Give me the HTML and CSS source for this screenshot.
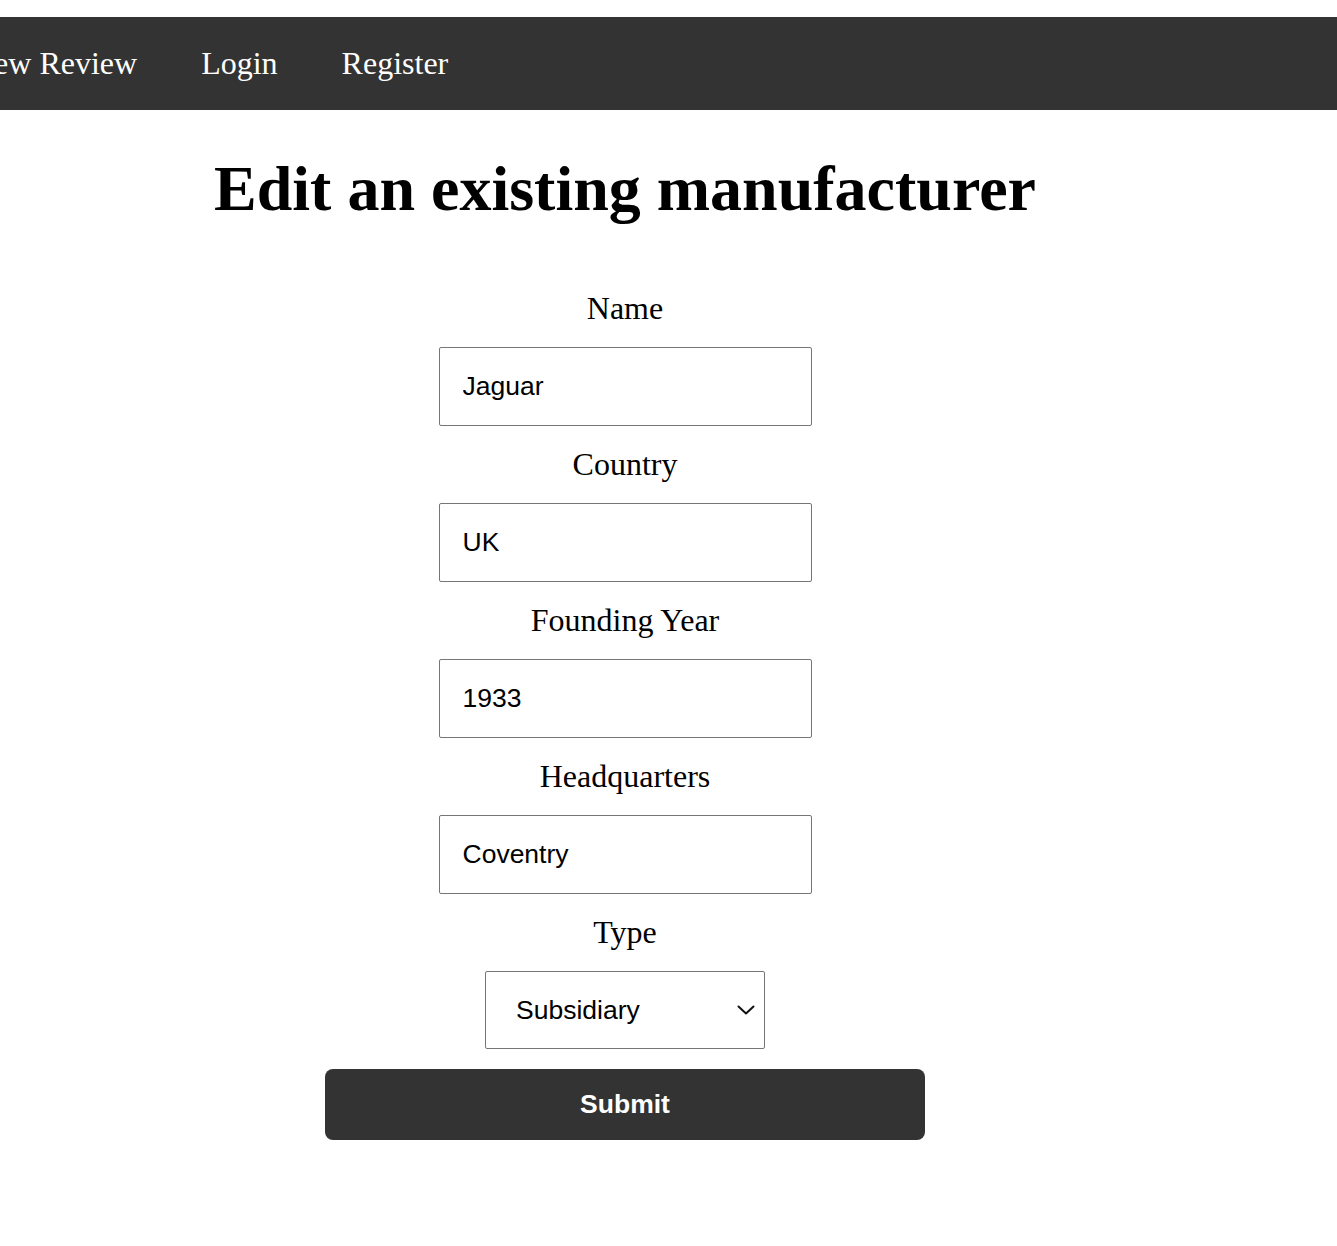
FILE: index.html
```html
<!DOCTYPE html>
<html lang="en">
<head>
<meta charset="utf-8">
<title>Edit an existing manufacturer</title>
<link rel="stylesheet" href="styles.css">
</head>
<body>
<nav class="topnav">
  <ul class="topnav-list">
    <li><a href="#">New Review</a></li>
    <li><a href="#">Login</a></li>
    <li><a href="#">Register</a></li>
  </ul>
</nav>
<main class="page">
  <h1 class="page-title">Edit an existing manufacturer</h1>
  <form class="edit-form">
    <label class="field-label" for="name">Name</label>
    <input class="field-input" id="name" type="text" value="Jaguar">
    <label class="field-label" for="country">Country</label>
    <input class="field-input" id="country" type="text" value="UK">
    <label class="field-label" for="year">Founding Year</label>
    <input class="field-input" id="year" type="text" value="1933">
    <label class="field-label" for="hq">Headquarters</label>
    <input class="field-input" id="hq" type="text" value="Coventry">
    <label class="field-label" for="type">Type</label>
    <div class="select-wrap">
      <select class="field-select" id="type">
        <option>Independent</option>
        <option selected>Subsidiary</option>
      </select>
      <svg class="select-arrow" width="18" height="10" viewBox="0 0 18 10" aria-hidden="true">
        <path d="M1.5 1.5 L9 8.5 L16.5 1.5" fill="none" stroke="#111" stroke-width="2" stroke-linecap="round" stroke-linejoin="round"/>
      </svg>
    </div>
    <button class="submit-btn" type="button">Submit</button>
  </form>
</main>
</body>
</html>
```
FILE: styles.css
```css
html, body {
  margin: 0;
  padding: 0;
  background: #ffffff;
  font-family: "Liberation Serif", "Times New Roman", serif;
  color: #000;
  overflow-x: hidden;
}

.topnav {
  margin-top: 17px;
  background: #333333;
}

.topnav-list {
  list-style: none;
  margin: 0 0 0 -29px;
  padding: 28px 0;
  display: flex;
  gap: 64px;
  font-size: 32px;
  line-height: 37px;
  white-space: nowrap;
}

.topnav-list a {
  color: #ffffff;
  text-decoration: none;
}

.page {
  width: 1234px;
  margin-left: 8px;
  text-align: center;
}

.page-title {
  font-size: 64px;
  font-weight: bold;
  line-height: 74px;
  margin: 42px 0 43px;
}

.edit-form {
  display: flex;
  flex-direction: column;
  align-items: center;
  gap: 20px;
  padding-top: 21px;
}

.field-label {
  display: block;
  font-size: 32px;
  line-height: 37px;
}

.field-input {
  box-sizing: border-box;
  width: 373px;
  height: 79px;
  padding: 0 23px;
  border: 1px solid #767676;
  border-radius: 2px;
  font-family: "Liberation Sans", Arial, sans-serif;
  font-size: 26.5px;
  color: #000;
  background: #fff;
  outline: none;
}

.select-wrap {
  position: relative;
  width: 280px;
  height: 78px;
}

.field-select {
  -webkit-appearance: none;
  appearance: none;
  box-sizing: border-box;
  width: 280px;
  height: 78px;
  margin: 0;
  padding: 0 40px 0 30px;
  border: 1px solid #767676;
  border-radius: 2px;
  font-family: "Liberation Sans", Arial, sans-serif;
  font-size: 26.5px;
  color: #000;
  background-color: #fff;
}

.select-arrow {
  position: absolute;
  right: 10px;
  top: 34px;
  pointer-events: none;
}

.submit-btn {
  width: 600px;
  height: 71px;
  border: none;
  border-radius: 8px;
  background: #333333;
  color: #ffffff;
  font-family: "Liberation Sans", Arial, sans-serif;
  font-weight: bold;
  font-size: 26.5px;
  cursor: pointer;
}
```
